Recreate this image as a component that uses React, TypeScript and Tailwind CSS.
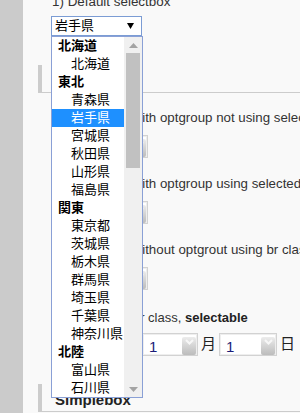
import React from "react";

const groups = [
  { label: "北海道", items: ["北海道"] },
  { label: "東北", items: ["青森県", "岩手県", "宮城県", "秋田県", "山形県", "福島県"] },
  { label: "関東", items: ["東京都", "茨城県", "栃木県", "群馬県", "埼玉県", "千葉県", "神奈川県"] },
  { label: "北陸", items: ["富山県", "石川県", "福井県"] },
];

function Knob() {
  return (
    <div className="mr-px flex h-[18px] w-[14px] shrink-0 items-start justify-center rounded-[2px] bg-gradient-to-b from-[#ececec] to-[#bcbcbc]">
      <svg width="9" height="6" viewBox="0 0 9 6" className="mt-[2px]">
        <path d="M1 1l3.5 3.5L8 1" stroke="#f7f7f7" strokeWidth="2" fill="none" />
      </svg>
    </div>
  );
}

function Box({ className, value }: { className: string; value?: string }) {
  return (
    <div
      className={`flex h-[23px] shrink-0 items-end justify-between border border-[#d2d2d2] bg-white shadow-[inset_0_0_0_1px_#eeeeee] ${className}`}
    >
      <span className="self-center pl-[6px] pt-[3px] text-[15px] leading-none text-[#1c1c78]">
        {value}
      </span>
      <Knob />
    </div>
  );
}

function Heading({ children, className }: { children: React.ReactNode; className: string }) {
  return (
    <h2
      className={`h-[28px] border-b border-l-4 border-[#cccccc] pl-[13px] pt-[6px] text-[15px] font-bold leading-5 text-[#222] ${className}`}
    >
      {children}
    </h2>
  );
}

function Dropdown() {
  return (
    <div className="absolute left-0 top-full flex h-[362px] w-[92px] border border-[#8aa0d6] bg-white">
      <div className="w-[72px] overflow-hidden">
        {groups.map((g) => (
          <div key={g.label}>
            <div className="h-[18px] pl-[6px] font-bold leading-[18px] text-black">{g.label}</div>
            {g.items.map((it) =>
              it === "岩手県" ? (
                <div key={it} className="h-[18px] bg-[#1e90ff] pl-[19px] leading-[18px] text-white">
                  {it}
                </div>
              ) : (
                <div key={it} className="h-[18px] pl-[19px] leading-[18px] text-black">
                  {it}
                </div>
              )
            )}
          </div>
        ))}
      </div>
      {/* scrollbar */}
      <div className="flex w-[18px] flex-col bg-[#f0f0f0]">
        <div className="flex h-4 items-center justify-center">
          <svg width="9" height="5" viewBox="0 0 9 5">
            <path d="M0 5h9L4.5 0z" fill="#a3a3a3" />
          </svg>
        </div>
        <div className="mx-[2px] h-[115px] bg-[#c1c1c1]" />
        <div className="flex-1" />
        <div className="flex h-4 items-center justify-center">
          <svg width="9" height="5" viewBox="0 0 9 5">
            <path d="M0 0h9L4.5 5z" fill="#a3a3a3" />
          </svg>
        </div>
      </div>
    </div>
  );
}

export default function App() {
  return (
    <div className="flex h-[413px] w-[300px] overflow-hidden bg-[#f9f9f9] font-['Liberation_Sans','Noto_Sans_CJK_JP',sans-serif] text-[13px] text-[#333]">
      <div className="w-[23px] shrink-0 bg-[#cbcbcb]" />
      <main className="min-w-0 flex-1 pl-[15px]">
        <div className="-mt-2">
          {/* 1) open select */}
          <section className="pl-[14px]">
            <p className="h-5 whitespace-nowrap text-[13.4px] leading-5">1) Default selectbox</p>
            <div className="relative z-10 -ml-px mt-1 w-[91px]">
              <div className="flex h-5 items-center justify-between border border-[#7b9cd4] bg-white pl-[3px] pr-[7px] text-black">
                <span>岩手県</span>
                <svg width="7" height="6" viewBox="0 0 7 6">
                  <path d="M0 0h7L3.5 6z" fill="#000" />
                </svg>
              </div>
              <Dropdown />
            </div>
          </section>

          <Heading className="mt-[29px]">Selectbox</Heading>

          <section className="mt-[15px] pl-[14px]">
            <p className="h-5 whitespace-nowrap text-[13.3px] leading-5">
              <span className="mr-[3px]">2) Selectbox</span> with optgroup not using selectedClass
            </p>
            <Box className="mt-[7px] w-[96px]" value="北海道" />
          </section>

          <section className="mt-4 pl-[14px]">
            <p className="h-5 whitespace-nowrap text-[13.3px] leading-5">
              <span className="mr-[3px]">3) Selectbox</span> with optgroup using selected class
            </p>
            <Box className="mt-[7px] w-[96px]" value="北海道" />
          </section>

          <section className="mt-4 pl-[14px]">
            <p className="h-5 whitespace-nowrap text-[13.3px] leading-5">
              <span className="mr-[3px]">4) Selectbox</span> without optgrout using br class
            </p>
            <Box className="mt-[7px] w-[96px]" value="北海道" />
          </section>

          <section className="mt-4 pl-[14px]">
            <p className="h-5 whitespace-nowrap pt-[2px] leading-5">
              5) Date using br class, <b className="text-[#222]">selectable</b>
            </p>
            <div className="mt-[7px] flex items-center whitespace-nowrap">
              <Box className="w-[70px]" value="2014" />
              <span className="ml-[2px] mr-[3px] text-[15px] text-[#222]">年</span>
              <Box className="w-[56px]" value="1" />
              <span className="ml-[3px] mr-[3px] text-[15px] text-[#222]">月</span>
              <Box className="w-[58px]" value="1" />
              <span className="ml-[3px] text-[15px] text-[#222]">日</span>
            </div>
          </section>

          <Heading className="mt-7">Simplebox</Heading>
        </div>
      </main>
    </div>
  );
}
